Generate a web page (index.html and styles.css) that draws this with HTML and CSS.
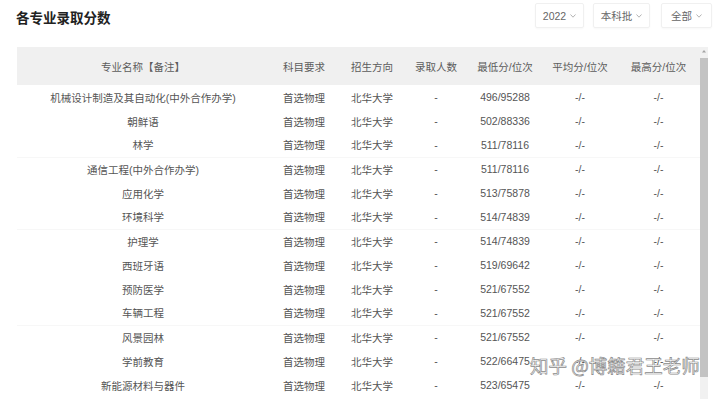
FILE: index.html
```html
<!DOCTYPE html>
<html lang="zh">
<head>
<meta charset="utf-8">
<link rel="stylesheet" href="styles.css">
</head>
<body>
<div class="page">
  <div class="topbar">
    <h1 class="title">各专业录取分数</h1>
    <div class="filters">
      <div class="select s-year">2022<svg class="chev" viewBox="0 0 6 4" width="6" height="4"><path d="M0.5 0.5 L3 3.2 L5.5 0.5" fill="none" stroke="#aaa" stroke-width="0.9"/></svg></div>
      <div class="select s-batch">本科批<svg class="chev" viewBox="0 0 6 4" width="6" height="4"><path d="M0.5 0.5 L3 3.2 L5.5 0.5" fill="none" stroke="#aaa" stroke-width="0.9"/></svg></div>
      <div class="select s-all">全部<svg class="chev" viewBox="0 0 6 4" width="6" height="4"><path d="M0.5 0.5 L3 3.2 L5.5 0.5" fill="none" stroke="#aaa" stroke-width="0.9"/></svg></div>
    </div>
  </div>
  <div class="main">
    <div class="table-wrap">
      <table class="scores">
        <colgroup>
          <col class="c1"><col class="c2"><col class="c3"><col class="c4"><col class="c5"><col class="c6"><col class="c7">
        </colgroup>
        <thead>
          <tr><th>专业名称【备注】</th><th>科目要求</th><th>招生方向</th><th>录取人数</th><th>最低分/位次</th><th>平均分/位次</th><th>最高分/位次</th></tr>
        </thead>
        <tbody>
          <tr><td>机械设计制造及其自动化(中外合作办学)</td><td>首选物理</td><td>北华大学</td><td>-</td><td>496/95288</td><td>-/-</td><td>-/-</td></tr>
          <tr><td>朝鲜语</td><td>首选物理</td><td>北华大学</td><td>-</td><td>502/88336</td><td>-/-</td><td>-/-</td></tr>
          <tr><td>林学</td><td>首选物理</td><td>北华大学</td><td>-</td><td>511/78116</td><td>-/-</td><td>-/-</td></tr>
          <tr class="sep"><td>通信工程(中外合作办学)</td><td>首选物理</td><td>北华大学</td><td>-</td><td>511/78116</td><td>-/-</td><td>-/-</td></tr>
          <tr><td>应用化学</td><td>首选物理</td><td>北华大学</td><td>-</td><td>513/75878</td><td>-/-</td><td>-/-</td></tr>
          <tr><td>环境科学</td><td>首选物理</td><td>北华大学</td><td>-</td><td>514/74839</td><td>-/-</td><td>-/-</td></tr>
          <tr class="sep"><td>护理学</td><td>首选物理</td><td>北华大学</td><td>-</td><td>514/74839</td><td>-/-</td><td>-/-</td></tr>
          <tr><td>西班牙语</td><td>首选物理</td><td>北华大学</td><td>-</td><td>519/69642</td><td>-/-</td><td>-/-</td></tr>
          <tr><td>预防医学</td><td>首选物理</td><td>北华大学</td><td>-</td><td>521/67552</td><td>-/-</td><td>-/-</td></tr>
          <tr><td>车辆工程</td><td>首选物理</td><td>北华大学</td><td>-</td><td>521/67552</td><td>-/-</td><td>-/-</td></tr>
          <tr class="sep"><td>风景园林</td><td>首选物理</td><td>北华大学</td><td>-</td><td>521/67552</td><td>-/-</td><td>-/-</td></tr>
          <tr><td>学前教育</td><td>首选物理</td><td>北华大学</td><td>-</td><td>522/66475</td><td>-/-</td><td>-/-</td></tr>
          <tr><td>新能源材料与器件</td><td>首选物理</td><td>北华大学</td><td>-</td><td>523/65475</td><td>-/-</td><td>-/-</td></tr>
        </tbody>
      </table>
    </div>
    <div class="scrollbar">
      <svg class="arrow" viewBox="0 0 8 6" width="8" height="6"><path d="M2 4.5 L4 2 L6 4.5 Z" fill="#a3a3a3"/></svg>
      <div class="thumb"></div>
    </div>
    <div class="watermark">知乎 @博籍君王老师</div>
  </div>
</div>
</body>
</html>
```

FILE: styles.css
```css
* { box-sizing: border-box; }
html, body { margin: 0; padding: 0; background: #fff; }
body {
  font-family: "Liberation Sans", "Noto Sans CJK SC", sans-serif;
  color: #555;
  width: 720px;
  height: 399px;
  overflow: hidden;
}
.page { display: flex; flex-direction: column; }
.topbar {
  height: 47px;
  display: flex;
  justify-content: space-between;
  align-items: flex-start;
  padding: 3px 8px 0 16px;
}
.title {
  margin: 4px 0 0;
  font-size: 13.5px;
  line-height: 20px;
  font-weight: bold;
  color: #222;
  font-family: "Noto Sans CJK SC", sans-serif;
}
.filters { display: flex; }
.select {
  height: 25px;
  border: 1px solid #f0f0f0;
  border-radius: 2px;
  display: flex;
  align-items: center;
  justify-content: center;
  gap: 4px;
  font-size: 10.5px;
  color: #666;
  box-shadow: 0 1px 2px rgba(0, 0, 0, 0.03);
}
.s-year { width: 49px; }
.s-batch { width: 57px; margin-left: 9px; }
.s-all { width: 51px; margin-left: 11px; }
.chev { display: block; margin-top: 1px; }
.main {
  display: flex;
  margin-left: 17px;
  position: relative;
  height: 352px;
}
.table-wrap { width: 683px; height: 352px; overflow: hidden; }
.scores {
  width: 683px;
  table-layout: fixed;
  border-collapse: collapse;
  font-size: 10.5px;
}
.c1 { width: 252px; }
.c2 { width: 70px; }
.c3 { width: 66px; }
.c4 { width: 62px; }
.c5 { width: 76px; }
.c6 { width: 74px; }
.c7 { width: 83px; }
.scores th {
  height: 38px;
  background: #f0f0f0;
  font-weight: normal;
  color: #5c5c5c;
  text-align: center;
  padding: 0;
}
.scores td {
  height: 24px;
  text-align: center;
  padding: 0;
  color: #555;
  white-space: nowrap;
}
.scores tr.sep td { border-top: 1px solid #f7f7f7; }
.scrollbar {
  width: 8px;
  height: 352px;
  background: #f1f1f1;
  display: flex;
  flex-direction: column;
  align-items: center;
}
.arrow { display: block; margin-top: 1px; }
.thumb {
  width: 8px;
  height: 319px;
  margin-top: 4px;
  background: #c3c3c3;
}
.watermark {
  position: absolute;
  left: 513px;
  top: 305px;
  font-family: "Noto Sans CJK SC", sans-serif;
  font-size: 18.5px;
  color: #fff;
  -webkit-text-stroke: 0.7px #8a8a8a;
  white-space: nowrap;
}
```
